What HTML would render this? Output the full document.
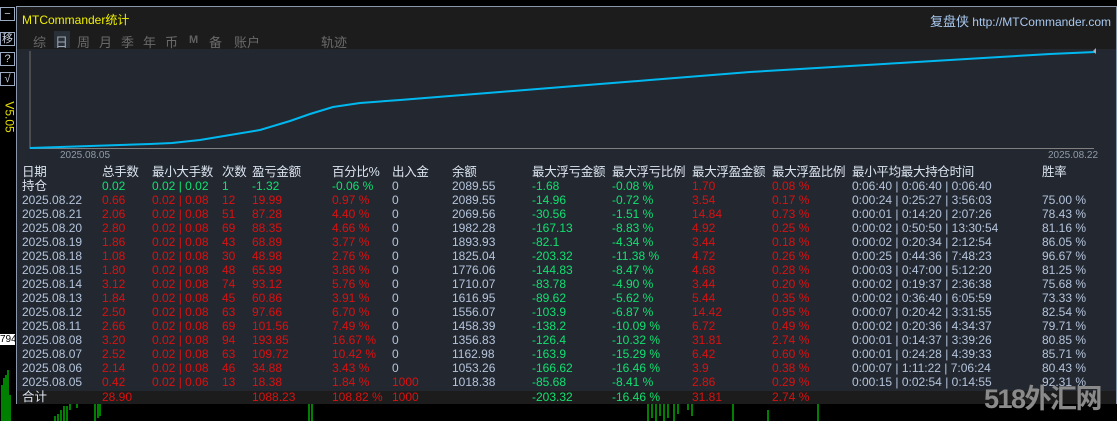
<!DOCTYPE html>
<html><head><meta charset="utf-8"><style>
*{margin:0;padding:0;box-sizing:border-box}
html,body{width:1117px;height:421px;overflow:hidden}
body{background:#000;position:relative;font-family:"Liberation Sans","Noto Sans CJK SC",sans-serif;font-size:12px;color:#b4c4dc}
.a{position:absolute;white-space:nowrap}
.btn{position:absolute;left:0;width:15px;height:14px;border:1px solid #9aa8c0;color:#c8d0e0;font-size:11px;line-height:12px;text-align:center;background:#000}
#panel{position:absolute;left:16px;top:6px;width:1101px;height:398px;border:1px solid #8a96aa;background:#232830}
#title{position:absolute;left:0;top:0;width:100%;height:42px;background:#1c1c1c}
.r{position:absolute;left:0;height:14px;line-height:14px;width:100%}
.r span{position:absolute}
.g{color:#10e070}.d{color:#dc1010}.w{color:#b4c4dc}
.hd span{color:#dce4f0;font-size:12.5px;letter-spacing:-0.3px}
</style></head><body>
<div class="btn" style="top:7px">−</div>
<div class="btn" style="top:32px">移</div>
<div class="btn" style="top:52px">?</div>
<div class="btn" style="top:72px">√</div>
<div class="a" style="left:-6px;top:110px;transform:rotate(90deg);color:#e8e000;font-size:12px">V5.05</div>
<div class="a" style="left:0;top:334px;background:#fff;color:#000;font-size:10px;line-height:11px;width:15px;overflow:hidden">794</div>
<svg class="a" style="left:0;top:365px" width="1117" height="56">
<g stroke="#00ff00" stroke-width="1">
<line x1="2" y1="20" x2="2" y2="56"/><line x1="4" y1="13" x2="4" y2="56"/><line x1="6" y1="10" x2="6" y2="56"/><line x1="8" y1="5" x2="8" y2="56"/><line x1="10" y1="30" x2="10" y2="56"/>
<line x1="55" y1="51" x2="55" y2="56"/><line x1="58" y1="49" x2="58" y2="56"/><line x1="61" y1="45" x2="61" y2="56"/><line x1="64" y1="41" x2="64" y2="56"/><line x1="67" y1="41" x2="67" y2="56"/><line x1="70" y1="39" x2="70" y2="45"/><line x1="77" y1="39" x2="77" y2="43"/>
<line x1="95" y1="39" x2="95" y2="56"/><line x1="98" y1="39" x2="98" y2="53"/><line x1="100" y1="39" x2="100" y2="51"/>
<line x1="309" y1="39" x2="309" y2="56"/><line x1="312" y1="39" x2="312" y2="56"/>
<line x1="648" y1="39" x2="648" y2="56"/><line x1="652" y1="39" x2="652" y2="53"/><line x1="656" y1="39" x2="656" y2="56"/><line x1="660" y1="39" x2="660" y2="51"/><line x1="664" y1="39" x2="664" y2="56"/><line x1="668" y1="39" x2="668" y2="53"/><line x1="674" y1="39" x2="674" y2="56"/><line x1="678" y1="39" x2="678" y2="49"/>
<line x1="688" y1="39" x2="688" y2="45"/><line x1="692" y1="39" x2="692" y2="51"/><line x1="733" y1="39" x2="733" y2="56"/><line x1="768" y1="45" x2="768" y2="56"/><line x1="818" y1="39" x2="818" y2="56"/>
</g></svg>
<div id="panel">
<div id="title">
<div class="a" style="left:5px;top:4px;color:#f0f000;font-size:12px">MTCommander统计</div>
<div class="a" style="right:5px;top:4px;color:#a8c8f0;font-size:12px"><span style="font-size:13px">复盘侠</span> http://MTCommander.com</div>
<div class="a" style="left:16px;top:25px;color:#6a6a6a;font-size:13px">综</div>
<div class="a" style="left:37px;top:24px;width:16px;height:17px;background:#2a3038"></div>
<div class="a" style="left:38px;top:25px;color:#a0a8b4;font-size:13px">日</div>
<div class="a" style="left:60px;top:25px;color:#6a6a6a;font-size:13px">周</div>
<div class="a" style="left:82px;top:25px;color:#6a6a6a;font-size:13px">月</div>
<div class="a" style="left:104px;top:25px;color:#6a6a6a;font-size:13px">季</div>
<div class="a" style="left:126px;top:25px;color:#6a6a6a;font-size:13px">年</div>
<div class="a" style="left:148px;top:25px;color:#6a6a6a;font-size:13px">币</div>
<div class="a" style="left:172px;top:27px;color:#606060;font-size:11px;font-weight:bold">M</div>
<div class="a" style="left:192px;top:25px;color:#6a6a6a;font-size:13px">备</div>
<div class="a" style="left:217px;top:25px;color:#6a6a6a;font-size:13px">账户</div>
<div class="a" style="left:304px;top:25px;color:#6a6a6a;font-size:13px">轨迹</div>
</div>
</div>
<svg class="a" style="left:0;top:0" width="1117" height="170">
<line x1="30" y1="51" x2="30" y2="149" stroke="#707070"/>
<line x1="30" y1="148.5" x2="1094" y2="148.5" stroke="#808080"/>
<polyline fill="none" stroke="#00b8f0" stroke-width="2" points="30,148 60,147 90,146 120,145 150,144 172,143 200,140 230,135 260,130 290,121 310,114 333,107 360,103 400,100 450,96 500,92 550,88 600,84 650,80 700,76 750,72 800,69 850,66 900,63 950,60 1000,57 1050,54 1095,52"/>
<polygon points="1096,48 1093,51 1096,54" fill="#aab"/>
</svg>
<div class="a" style="left:60px;top:150px;color:#909aa8;font-size:10px">2025.08.05</div>
<div class="a" style="left:1048px;top:150px;color:#909aa8;font-size:10px">2025.08.22</div>
<div class="a" style="left:17px;top:391px;width:1099px;height:13px;background:#1c1c1c"></div>
<div class="a" style="left:0;top:0;width:1117px;height:421px">
<div class="r hd" style="top:165px"><span style="left:22px">日期</span><span style="left:102px">总手数</span><span style="left:152px">最小大手数</span><span style="left:222px">次数</span><span style="left:252px">盈亏金额</span><span style="left:332px">百分比%</span><span style="left:392px">出入金</span><span style="left:452px">余额</span><span style="left:532px">最大浮亏金额</span><span style="left:612px">最大浮亏比例</span><span style="left:692px">最大浮盈金额</span><span style="left:772px">最大浮盈比例</span><span style="left:852px">最小平均最大持仓时间</span><span style="left:1042px">胜率</span></div>
<div class="r" style="top:179px"><span style="left:22px;font-size:12.5px;color:#dce4f0">持仓</span><span class="g" style="left:102px">0.02</span><span class="g" style="left:152px">0.02 | 0.02</span><span class="g" style="left:222px">1</span><span class="g" style="left:252px">-1.32</span><span class="g" style="left:332px">-0.06 %</span><span class="w" style="left:392px">0</span><span class="w" style="left:452px">2089.55</span><span class="g" style="left:532px">-1.68</span><span class="g" style="left:612px">-0.08 %</span><span class="d" style="left:692px">1.70</span><span class="d" style="left:772px">0.08 %</span><span class="w" style="left:852px">0:06:40 | 0:06:40 | 0:06:40</span></div>
<div class="r" style="top:193px"><span class="w" style="left:22px">2025.08.22</span><span class="d" style="left:102px">0.66</span><span class="d" style="left:152px">0.02 | 0.08</span><span class="d" style="left:222px">12</span><span class="d" style="left:252px">19.99</span><span class="d" style="left:332px">0.97 %</span><span class="w" style="left:392px">0</span><span class="w" style="left:452px">2089.55</span><span class="g" style="left:532px">-14.96</span><span class="g" style="left:612px">-0.72 %</span><span class="d" style="left:692px">3.54</span><span class="d" style="left:772px">0.17 %</span><span class="w" style="left:852px">0:00:24 | 0:25:27 | 3:56:03</span><span class="w" style="left:1042px">75.00 %</span></div>
<div class="r" style="top:207px"><span class="w" style="left:22px">2025.08.21</span><span class="d" style="left:102px">2.06</span><span class="d" style="left:152px">0.02 | 0.08</span><span class="d" style="left:222px">51</span><span class="d" style="left:252px">87.28</span><span class="d" style="left:332px">4.40 %</span><span class="w" style="left:392px">0</span><span class="w" style="left:452px">2069.56</span><span class="g" style="left:532px">-30.56</span><span class="g" style="left:612px">-1.51 %</span><span class="d" style="left:692px">14.84</span><span class="d" style="left:772px">0.73 %</span><span class="w" style="left:852px">0:00:01 | 0:14:20 | 2:07:26</span><span class="w" style="left:1042px">78.43 %</span></div>
<div class="r" style="top:221px"><span class="w" style="left:22px">2025.08.20</span><span class="d" style="left:102px">2.80</span><span class="d" style="left:152px">0.02 | 0.08</span><span class="d" style="left:222px">69</span><span class="d" style="left:252px">88.35</span><span class="d" style="left:332px">4.66 %</span><span class="w" style="left:392px">0</span><span class="w" style="left:452px">1982.28</span><span class="g" style="left:532px">-167.13</span><span class="g" style="left:612px">-8.83 %</span><span class="d" style="left:692px">4.92</span><span class="d" style="left:772px">0.25 %</span><span class="w" style="left:852px">0:00:02 | 0:50:50 | 13:30:54</span><span class="w" style="left:1042px">81.16 %</span></div>
<div class="r" style="top:235px"><span class="w" style="left:22px">2025.08.19</span><span class="d" style="left:102px">1.86</span><span class="d" style="left:152px">0.02 | 0.08</span><span class="d" style="left:222px">43</span><span class="d" style="left:252px">68.89</span><span class="d" style="left:332px">3.77 %</span><span class="w" style="left:392px">0</span><span class="w" style="left:452px">1893.93</span><span class="g" style="left:532px">-82.1</span><span class="g" style="left:612px">-4.34 %</span><span class="d" style="left:692px">3.44</span><span class="d" style="left:772px">0.18 %</span><span class="w" style="left:852px">0:00:02 | 0:20:34 | 2:12:54</span><span class="w" style="left:1042px">86.05 %</span></div>
<div class="r" style="top:249px"><span class="w" style="left:22px">2025.08.18</span><span class="d" style="left:102px">1.08</span><span class="d" style="left:152px">0.02 | 0.08</span><span class="d" style="left:222px">30</span><span class="d" style="left:252px">48.98</span><span class="d" style="left:332px">2.76 %</span><span class="w" style="left:392px">0</span><span class="w" style="left:452px">1825.04</span><span class="g" style="left:532px">-203.32</span><span class="g" style="left:612px">-11.38 %</span><span class="d" style="left:692px">4.72</span><span class="d" style="left:772px">0.26 %</span><span class="w" style="left:852px">0:00:25 | 0:44:36 | 7:48:23</span><span class="w" style="left:1042px">96.67 %</span></div>
<div class="r" style="top:263px"><span class="w" style="left:22px">2025.08.15</span><span class="d" style="left:102px">1.80</span><span class="d" style="left:152px">0.02 | 0.08</span><span class="d" style="left:222px">48</span><span class="d" style="left:252px">65.99</span><span class="d" style="left:332px">3.86 %</span><span class="w" style="left:392px">0</span><span class="w" style="left:452px">1776.06</span><span class="g" style="left:532px">-144.83</span><span class="g" style="left:612px">-8.47 %</span><span class="d" style="left:692px">4.68</span><span class="d" style="left:772px">0.28 %</span><span class="w" style="left:852px">0:00:03 | 0:47:00 | 5:12:20</span><span class="w" style="left:1042px">81.25 %</span></div>
<div class="r" style="top:277px"><span class="w" style="left:22px">2025.08.14</span><span class="d" style="left:102px">3.12</span><span class="d" style="left:152px">0.02 | 0.08</span><span class="d" style="left:222px">74</span><span class="d" style="left:252px">93.12</span><span class="d" style="left:332px">5.76 %</span><span class="w" style="left:392px">0</span><span class="w" style="left:452px">1710.07</span><span class="g" style="left:532px">-83.78</span><span class="g" style="left:612px">-4.90 %</span><span class="d" style="left:692px">3.44</span><span class="d" style="left:772px">0.20 %</span><span class="w" style="left:852px">0:00:02 | 0:19:37 | 2:36:38</span><span class="w" style="left:1042px">75.68 %</span></div>
<div class="r" style="top:291px"><span class="w" style="left:22px">2025.08.13</span><span class="d" style="left:102px">1.84</span><span class="d" style="left:152px">0.02 | 0.08</span><span class="d" style="left:222px">45</span><span class="d" style="left:252px">60.86</span><span class="d" style="left:332px">3.91 %</span><span class="w" style="left:392px">0</span><span class="w" style="left:452px">1616.95</span><span class="g" style="left:532px">-89.62</span><span class="g" style="left:612px">-5.62 %</span><span class="d" style="left:692px">5.44</span><span class="d" style="left:772px">0.35 %</span><span class="w" style="left:852px">0:00:02 | 0:36:40 | 6:05:59</span><span class="w" style="left:1042px">73.33 %</span></div>
<div class="r" style="top:305px"><span class="w" style="left:22px">2025.08.12</span><span class="d" style="left:102px">2.50</span><span class="d" style="left:152px">0.02 | 0.08</span><span class="d" style="left:222px">63</span><span class="d" style="left:252px">97.66</span><span class="d" style="left:332px">6.70 %</span><span class="w" style="left:392px">0</span><span class="w" style="left:452px">1556.07</span><span class="g" style="left:532px">-103.9</span><span class="g" style="left:612px">-6.87 %</span><span class="d" style="left:692px">14.42</span><span class="d" style="left:772px">0.95 %</span><span class="w" style="left:852px">0:00:07 | 0:20:42 | 3:31:55</span><span class="w" style="left:1042px">82.54 %</span></div>
<div class="r" style="top:319px"><span class="w" style="left:22px">2025.08.11</span><span class="d" style="left:102px">2.66</span><span class="d" style="left:152px">0.02 | 0.08</span><span class="d" style="left:222px">69</span><span class="d" style="left:252px">101.56</span><span class="d" style="left:332px">7.49 %</span><span class="w" style="left:392px">0</span><span class="w" style="left:452px">1458.39</span><span class="g" style="left:532px">-138.2</span><span class="g" style="left:612px">-10.09 %</span><span class="d" style="left:692px">6.72</span><span class="d" style="left:772px">0.49 %</span><span class="w" style="left:852px">0:00:02 | 0:20:36 | 4:34:37</span><span class="w" style="left:1042px">79.71 %</span></div>
<div class="r" style="top:333px"><span class="w" style="left:22px">2025.08.08</span><span class="d" style="left:102px">3.20</span><span class="d" style="left:152px">0.02 | 0.08</span><span class="d" style="left:222px">94</span><span class="d" style="left:252px">193.85</span><span class="d" style="left:332px">16.67 %</span><span class="w" style="left:392px">0</span><span class="w" style="left:452px">1356.83</span><span class="g" style="left:532px">-126.4</span><span class="g" style="left:612px">-10.32 %</span><span class="d" style="left:692px">31.81</span><span class="d" style="left:772px">2.74 %</span><span class="w" style="left:852px">0:00:01 | 0:14:37 | 3:39:26</span><span class="w" style="left:1042px">80.85 %</span></div>
<div class="r" style="top:347px"><span class="w" style="left:22px">2025.08.07</span><span class="d" style="left:102px">2.52</span><span class="d" style="left:152px">0.02 | 0.08</span><span class="d" style="left:222px">63</span><span class="d" style="left:252px">109.72</span><span class="d" style="left:332px">10.42 %</span><span class="w" style="left:392px">0</span><span class="w" style="left:452px">1162.98</span><span class="g" style="left:532px">-163.9</span><span class="g" style="left:612px">-15.29 %</span><span class="d" style="left:692px">6.42</span><span class="d" style="left:772px">0.60 %</span><span class="w" style="left:852px">0:00:01 | 0:24:28 | 4:39:33</span><span class="w" style="left:1042px">85.71 %</span></div>
<div class="r" style="top:361px"><span class="w" style="left:22px">2025.08.06</span><span class="d" style="left:102px">2.14</span><span class="d" style="left:152px">0.02 | 0.08</span><span class="d" style="left:222px">46</span><span class="d" style="left:252px">34.88</span><span class="d" style="left:332px">3.43 %</span><span class="w" style="left:392px">0</span><span class="w" style="left:452px">1053.26</span><span class="g" style="left:532px">-166.62</span><span class="g" style="left:612px">-16.46 %</span><span class="d" style="left:692px">3.9</span><span class="d" style="left:772px">0.38 %</span><span class="w" style="left:852px">0:00:07 | 1:11:22 | 7:06:24</span><span class="w" style="left:1042px">80.43 %</span></div>
<div class="r" style="top:375px"><span class="w" style="left:22px">2025.08.05</span><span class="d" style="left:102px">0.42</span><span class="d" style="left:152px">0.02 | 0.06</span><span class="d" style="left:222px">13</span><span class="d" style="left:252px">18.38</span><span class="d" style="left:332px">1.84 %</span><span class="d" style="left:392px">1000</span><span class="w" style="left:452px">1018.38</span><span class="g" style="left:532px">-85.68</span><span class="g" style="left:612px">-8.41 %</span><span class="d" style="left:692px">2.86</span><span class="d" style="left:772px">0.29 %</span><span class="w" style="left:852px">0:00:15 | 0:02:54 | 0:14:55</span><span class="w" style="left:1042px">92.31 %</span></div>
<div class="r" style="top:390px"><span style="left:22px;font-size:12.5px;color:#dce4f0">合计</span><span class="d" style="left:102px">28.90</span><span class="d" style="left:252px">1088.23</span><span class="d" style="left:332px">108.82 %</span><span class="d" style="left:392px">1000</span><span class="g" style="left:532px">-203.32</span><span class="g" style="left:612px">-16.46 %</span><span class="d" style="left:692px">31.81</span><span class="d" style="left:772px">2.74 %</span></div>
</div>
<div class="a" style="left:984px;top:383px;color:#8a8a8a;font-size:27px;line-height:32px;font-weight:bold;letter-spacing:-1.5px">518外汇网</div>
</body></html>
